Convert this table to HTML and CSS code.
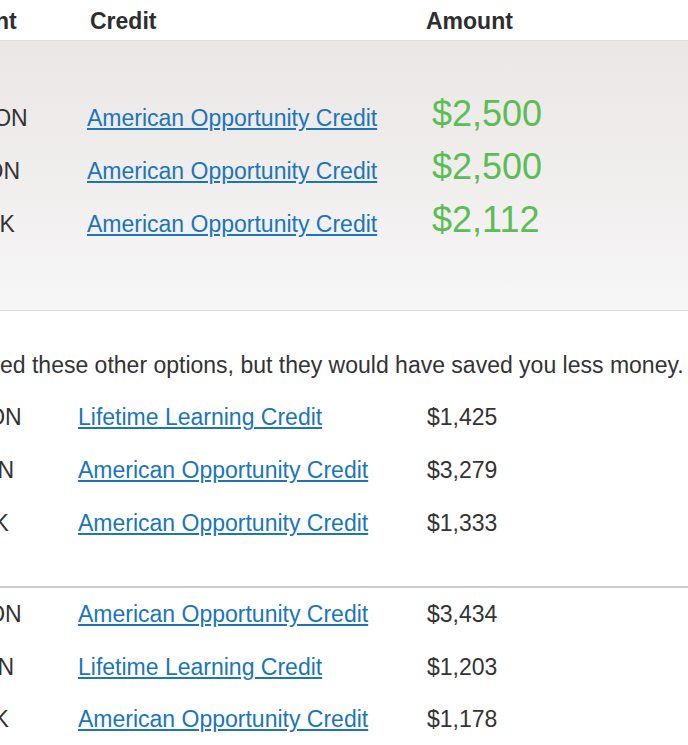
FILE: index.html
```html
<!DOCTYPE html>
<html lang="en">
<head>
<meta charset="utf-8">
<title>Education credits</title>
<link rel="stylesheet" href="styles.css">
</head>
<body>
<div class="page">
  <div class="head-row">
    <div class="hcell">Student</div>
    <div class="hcell">Credit</div>
    <div class="hcell">Amount</div>
  </div>

  <section class="best">
    <div class="row best-row">
      <div class="name">JASON</div>
      <div class="credit"><a href="#">American Opportunity Credit</a></div>
      <div class="amount big">$2,500</div>
    </div>
    <div class="row best-row">
      <div class="name">HOON</div>
      <div class="credit"><a href="#">American Opportunity Credit</a></div>
      <div class="amount big">$2,500</div>
    </div>
    <div class="row best-row">
      <div class="name">HANK</div>
      <div class="credit"><a href="#">American Opportunity Credit</a></div>
      <div class="amount big">$2,112</div>
    </div>
  </section>

  <p class="note">We also considered these other options, but they would have saved you less money.</p>

  <section class="option">
    <div class="row opt-row">
      <div class="name">JASON</div>
      <div class="credit"><a href="#">Lifetime Learning Credit</a></div>
      <div class="amount">$1,425</div>
    </div>
    <div class="row opt-row">
      <div class="name">HOON</div>
      <div class="credit"><a href="#">American Opportunity Credit</a></div>
      <div class="amount">$3,279</div>
    </div>
    <div class="row opt-row">
      <div class="name">HANK</div>
      <div class="credit"><a href="#">American Opportunity Credit</a></div>
      <div class="amount">$1,333</div>
    </div>
  </section>

  <section class="option option-sep">
    <div class="row opt-row">
      <div class="name">JASON</div>
      <div class="credit"><a href="#">American Opportunity Credit</a></div>
      <div class="amount">$3,434</div>
    </div>
    <div class="row opt-row">
      <div class="name">HOON</div>
      <div class="credit"><a href="#">Lifetime Learning Credit</a></div>
      <div class="amount">$1,203</div>
    </div>
    <div class="row opt-row">
      <div class="name">HANK</div>
      <div class="credit"><a href="#">American Opportunity Credit</a></div>
      <div class="amount">$1,178</div>
    </div>
  </section>
</div>
</body>
</html>
```

FILE: styles.css
```css
html, body {
  margin: 0;
  padding: 0;
  background: #ffffff;
}

body {
  overflow: hidden;
  font-family: "Liberation Sans", Arial, sans-serif;
  font-size: 23px;
  color: #333333;
}

.page {
  margin-left: -176px;
  width: 864px;
}

.head-row {
  display: grid;
  grid-template-columns: 159px 336px auto;
  padding-left: 107px;
  padding-top: 2px;
  height: 38px;
  line-height: 38px;
  font-weight: bold;
  color: #2e2e2e;
}

.best {
  background: linear-gradient(#ebe7e7 0%, #f1eeee 55%, #f7f7f7 100%);
  box-shadow: inset 0 1px 0 #e4e0e0;
  padding-top: 52px;
  padding-bottom: 60px;
  border-bottom: 1px solid #dadada;
}

.row {
  display: grid;
  align-items: baseline;
  line-height: 52.8px;
}

.best-row {
  grid-template-columns: 136px 345px auto;
  padding-left: 127px;
}

.opt-row {
  grid-template-columns: 133px 349px auto;
  padding-left: 121px;
}

.name {
  color: #333333;
  white-space: nowrap;
}

.credit a {
  color: #1b75bb;
  text-decoration: underline;
  text-underline-offset: 2px;
}

.amount {
  color: #333333;
}

.amount.big {
  font-size: 36px;
  line-height: 40px;
  color: #5cbd55;
}

.note {
  margin: 39px 0 0 0;
  line-height: 30px;
  white-space: nowrap;
  color: #333333;
}

.option {
  margin-top: 11px;
}

.option-sep {
  margin-top: 36px;
  border-top: 2px solid #cccccc;
}
```
